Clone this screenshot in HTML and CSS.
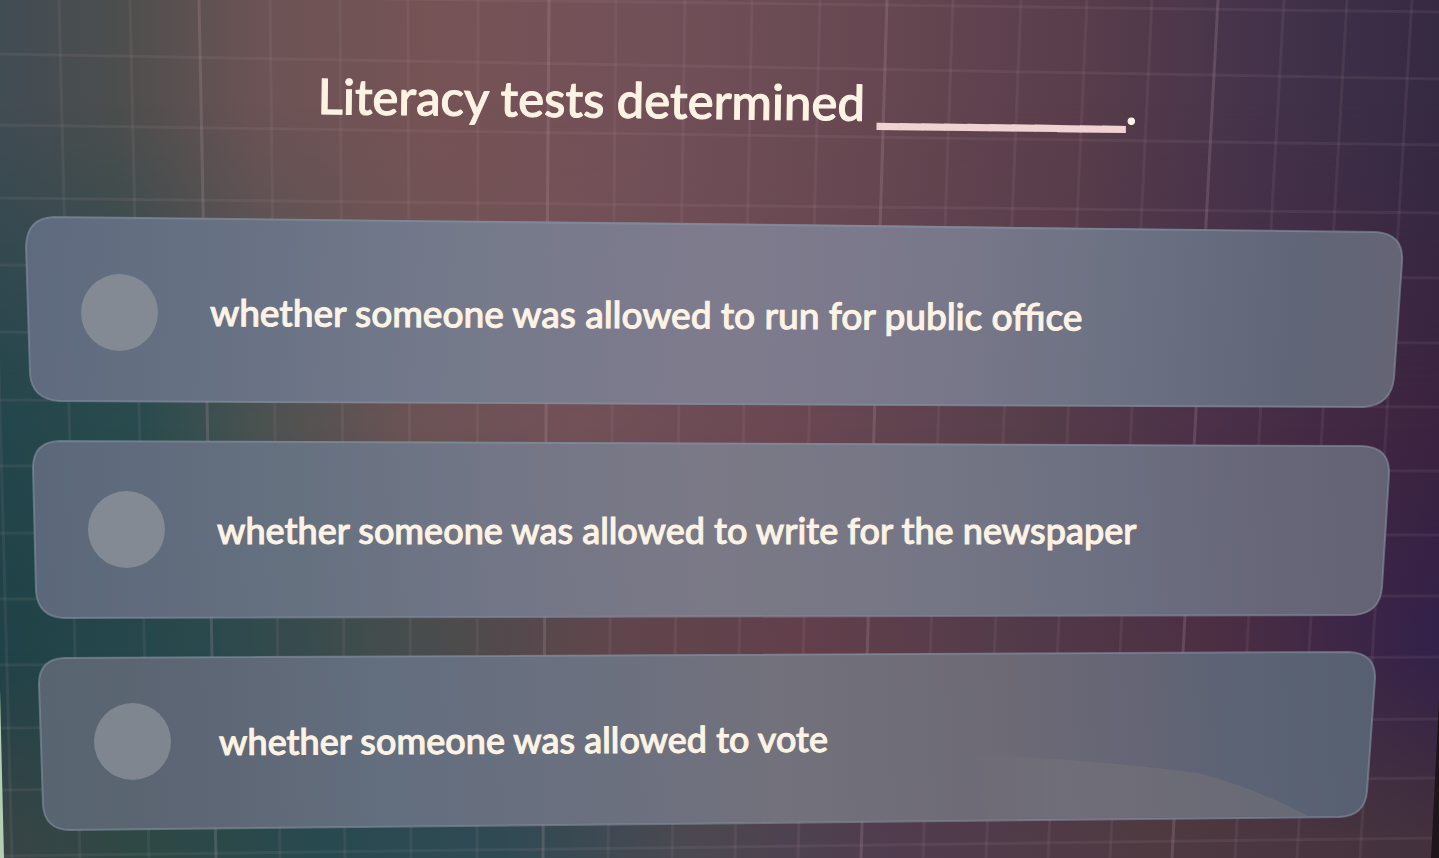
FILE: index.html
```html
<!DOCTYPE html>
<html lang="en">
<head>
    <meta charset="UTF-8">
    <meta name="viewport" content="width=device-width, initial-scale=1.0">
    <title>Literacy tests</title>
    <link rel="stylesheet" href="styles.css">
</head>
<body>

<!-- Backdrop: colour wash and grid -->
<svg class="backdrop" viewBox="0 0 1439 858" preserveAspectRatio="none" aria-hidden="true">
    <defs>
        <linearGradient id="washTop">
            <stop offset="0" stop-color="#424c54"/>
            <stop offset="0.08" stop-color="#4c4e4d"/>
            <stop offset="0.18" stop-color="#6c5355"/>
            <stop offset="0.3" stop-color="#765355"/>
            <stop offset="0.45" stop-color="#725058"/>
            <stop offset="0.6" stop-color="#674852"/>
            <stop offset="0.75" stop-color="#593d4b"/>
            <stop offset="0.88" stop-color="#43324a"/>
            <stop offset="1" stop-color="#352a42"/>
        </linearGradient>
        <linearGradient id="washMiddle">
            <stop offset="0" stop-color="#23464c"/>
            <stop offset="0.1" stop-color="#2a4b4e"/>
            <stop offset="0.18" stop-color="#4a5250"/>
            <stop offset="0.28" stop-color="#6a5355"/>
            <stop offset="0.4" stop-color="#725158"/>
            <stop offset="0.55" stop-color="#6a4853"/>
            <stop offset="0.7" stop-color="#583f4a"/>
            <stop offset="0.84" stop-color="#4b3048"/>
            <stop offset="1" stop-color="#3b233f"/>
        </linearGradient>
        <linearGradient id="washLow">
            <stop offset="0" stop-color="#204248"/>
            <stop offset="0.14" stop-color="#29494c"/>
            <stop offset="0.28" stop-color="#464d4c"/>
            <stop offset="0.42" stop-color="#5f464c"/>
            <stop offset="0.56" stop-color="#623f4b"/>
            <stop offset="0.7" stop-color="#533b4a"/>
            <stop offset="0.84" stop-color="#4c2f43"/>
            <stop offset="1" stop-color="#332149"/>
        </linearGradient>
        <linearGradient id="washBottom">
            <stop offset="0" stop-color="#384446"/>
            <stop offset="0.1" stop-color="#2e4844"/>
            <stop offset="0.22" stop-color="#28494f"/>
            <stop offset="0.35" stop-color="#304a54"/>
            <stop offset="0.48" stop-color="#4b4850"/>
            <stop offset="0.62" stop-color="#503c4e"/>
            <stop offset="0.8" stop-color="#4f3a42"/>
            <stop offset="1" stop-color="#42303d"/>
        </linearGradient>
        <linearGradient id="fadeMiddle" x1="0" y1="0" x2="0" y2="1">
            <stop offset="0.12" stop-color="#000"/>
            <stop offset="0.48" stop-color="#fff"/>
        </linearGradient>
        <linearGradient id="fadeLow" x1="0" y1="0" x2="0" y2="1">
            <stop offset="0.5" stop-color="#000"/>
            <stop offset="0.73" stop-color="#fff"/>
        </linearGradient>
        <linearGradient id="fadeBottom" x1="0" y1="0" x2="0" y2="1">
            <stop offset="0.76" stop-color="#000"/>
            <stop offset="0.97" stop-color="#fff"/>
        </linearGradient>
        <mask id="maskMiddle"><rect width="1439" height="858" fill="url(#fadeMiddle)"/></mask>
        <mask id="maskLow"><rect width="1439" height="858" fill="url(#fadeLow)"/></mask>
        <mask id="maskBottom"><rect width="1439" height="858" fill="url(#fadeBottom)"/></mask>
    </defs>

    <rect width="1439" height="858" fill="url(#washTop)"/>
    <rect width="1439" height="858" fill="url(#washMiddle)" mask="url(#maskMiddle)"/>
    <rect width="1439" height="858" fill="url(#washLow)" mask="url(#maskLow)"/>
    <rect width="1439" height="858" fill="url(#washBottom)" mask="url(#maskBottom)"/>

    <path class="grid-line" d="M-11 0L12 858M59 0L80 858M130 0L149 858M270 0L280 858M340 0L345 858M408 0L411 858M478 0L477 858M616 0L608 858M685 0L672 858M752 0L735 858M820 0L798 858M953 0L923 858M1021 0L986 858M1087 0L1048 858M1152 0L1110 858M1284 0L1235 858M1347 0L1297 858M1412 0L1360 858"/>
    <path class="grid-line" d="M0 -6Q720 3 1439 12M0 54Q720 69 1439 79M0 125Q720 137 1439 145M0 198Q720 206 1439 213M0 265L1439 278M0 332L1439 343M0 400L1439 407M0 466L1439 471M0 533L1439 535M0 599L1439 596M0 665L1439 657M0 728L1439 719M0 790L1439 778M0 856L1439 838"/>
    <path class="grid-line strong" d="M199 0L216 858M549 0L543 858M887 0L861 858M1218 0L1172 858"/>

    <path d="M0 690L4 858H0Z" fill="#b4cdb4"/>
    <path d="M1439 700L1431 858H1439Z" fill="#20151c"/>
</svg>

<main class="quiz">
    <h1 class="question">Literacy tests determined <span class="blank">___________</span>.</h1>

    <form class="answers">
        <label class="answer answer-first">
            <svg class="panel" viewBox="0 0 1380 192" preserveAspectRatio="none" aria-hidden="true">
                <defs>
                    <linearGradient id="panelFirst" gradientUnits="userSpaceOnUse" x1="0" y1="60" x2="1380" y2="160">
                        <stop offset="0" stop-color="#5e6a7e"/>
                        <stop offset="0.16" stop-color="#687284"/>
                        <stop offset="0.32" stop-color="#757a8b"/>
                        <stop offset="0.5" stop-color="#7e7b8d"/>
                        <stop offset="0.66" stop-color="#79788a"/>
                        <stop offset="0.8" stop-color="#6b7182"/>
                        <stop offset="0.92" stop-color="#606677"/>
                        <stop offset="1" stop-color="#656475"/>
                    </linearGradient>
                </defs>
                <path class="panel-shape" fill="url(#panelFirst)" d="M29 1Q690 6 1352 16Q1380 18 1378 46L1370 162Q1367 189 1340 191Q690 189 34 185Q7 183 5 158L1 30Q2 2 29 1Z"/>
            </svg>
            <input class="choice" type="radio" name="answer" value="office">
            <span class="answer-text">whether someone was allowed to run for public office</span>
        </label>

        <label class="answer answer-second">
            <svg class="panel" viewBox="0 0 1358 179" preserveAspectRatio="none" aria-hidden="true">
                <defs>
                    <linearGradient id="panelSecond" gradientUnits="userSpaceOnUse" x1="0" y1="140" x2="1358" y2="60">
                        <stop offset="0" stop-color="#5b687a"/>
                        <stop offset="0.2" stop-color="#667180"/>
                        <stop offset="0.34" stop-color="#727687"/>
                        <stop offset="0.5" stop-color="#7b7986"/>
                        <stop offset="0.66" stop-color="#757685"/>
                        <stop offset="0.8" stop-color="#6b6f80"/>
                        <stop offset="0.9" stop-color="#68677a"/>
                        <stop offset="1" stop-color="#636375"/>
                    </linearGradient>
                </defs>
                <path class="panel-shape" fill="url(#panelSecond)" d="M27 1Q680 2 1330 6Q1358 7 1357 34L1350 147Q1348 173 1322 175Q680 176 32 178Q6 177 4 151L1 28Q1 2 27 1Z"/>
            </svg>
            <input class="choice" type="radio" name="answer" value="newspaper">
            <span class="answer-text">whether someone was allowed to write for the newspaper</span>
        </label>

        <label class="answer answer-third">
            <svg class="panel" viewBox="0 0 1338 180" preserveAspectRatio="none" aria-hidden="true">
                <defs>
                    <linearGradient id="panelThird" gradientUnits="userSpaceOnUse" x1="0" y1="140" x2="1338" y2="60">
                        <stop offset="0" stop-color="#586470"/>
                        <stop offset="0.12" stop-color="#5d6674"/>
                        <stop offset="0.26" stop-color="#636e7e"/>
                        <stop offset="0.42" stop-color="#6b707f"/>
                        <stop offset="0.55" stop-color="#72717c"/>
                        <stop offset="0.72" stop-color="#6d6a75"/>
                        <stop offset="0.82" stop-color="#656575"/>
                        <stop offset="0.9" stop-color="#5b6374"/>
                        <stop offset="1" stop-color="#576071"/>
                    </linearGradient>
                    <linearGradient id="glare">
                        <stop offset="0" stop-color="#76747a" stop-opacity="0"/>
                        <stop offset="0.3" stop-color="#76747a" stop-opacity="0.5"/>
                        <stop offset="1" stop-color="#726f78" stop-opacity="0.6"/>
                    </linearGradient>
                </defs>
                <path class="panel-shape" fill="url(#panelThird)" d="M26 7Q670 3 1311 1Q1338 2 1337 28L1329 140Q1327 165 1301 166Q670 172 32 179Q7 179 5 154L1 33Q1 8 26 7Z"/>
                <path fill="url(#glare)" d="M925 103Q1050 108 1160 122Q1220 138 1270 165L950 168Q940 135 925 103Z"/>
            </svg>
            <input class="choice" type="radio" name="answer" value="vote">
            <span class="answer-text">whether someone was allowed to vote</span>
        </label>
    </form>
</main>

</body>
</html>
```

FILE: styles.css
```css
* {
    box-sizing: border-box;
}
body {
    margin: 0;
    font-family: Lato, "Open Sans", sans-serif;
    background-color: #4c3a48;
    color: #fdf3e4;
}
.backdrop {
    position: absolute;
    top: 0;
    left: 0;
    width: 100%;
    height: 100%;
    z-index: -1;
}
.grid-line {
    fill: none;
    stroke: #b9a0a8;
    stroke-width: 3;
    opacity: 0.1;
}
.strong {
    opacity: 0.22;
}
.quiz {
    display: flex;
    flex-direction: column;
    min-height: 100vh;
    padding-bottom: 27px;
}
.question {
    margin: 0;
    padding: 68px 0 84px 16px;
    font-size: 49px;
    line-height: 64px;
    font-weight: 500;
    text-align: center;
    transform: rotate(0.7deg);
    -webkit-text-stroke: 1px #fdf3e4;
}
.blank {
    color: #f0d2d2;
    -webkit-text-stroke: 4px #f0d2d2;
}
.answers {
    flex: 1;
    display: grid;
    grid-template-rows: 192fr 179fr 180fr;
    gap: 32px;
}
.answer {
    position: relative;
    display: flex;
    align-items: center;
    gap: 52px;
    padding-left: 56px;
    cursor: pointer;
}
.answer-first {
    margin: 0 35px 0 25px;
}
.answer-second {
    margin: 0 49px 0 32px;
}
.answer-third {
    gap: 48px;
    margin: 0 63px 0 38px;
}
.panel {
    position: absolute;
    top: 0;
    left: 0;
    width: 100%;
    height: 100%;
    z-index: -1;
}
.panel-shape {
    stroke: #8691a0;
    stroke-width: 2;
    stroke-opacity: 0.6;
}
.choice {
    appearance: none;
    flex: none;
    width: 77px;
    height: 77px;
    margin: 0;
    border-radius: 50%;
    background-color: #848a93;
    cursor: pointer;
}
.choice:checked {
    background-color: #d8dbe2;
}
.answer-text {
    font-size: 36px;
    line-height: 48px;
    font-weight: 500;
    -webkit-text-stroke: 1px #fdf3e4;
    transform-origin: left center;
}
.answer-first .answer-text {
    font-size: 37px;
    transform: rotate(0.3deg);
}
.answer-third .answer-text {
    transform: rotate(-0.3deg);
}
.answer-third .choice {
    background-color: #7f868f;
}
```
